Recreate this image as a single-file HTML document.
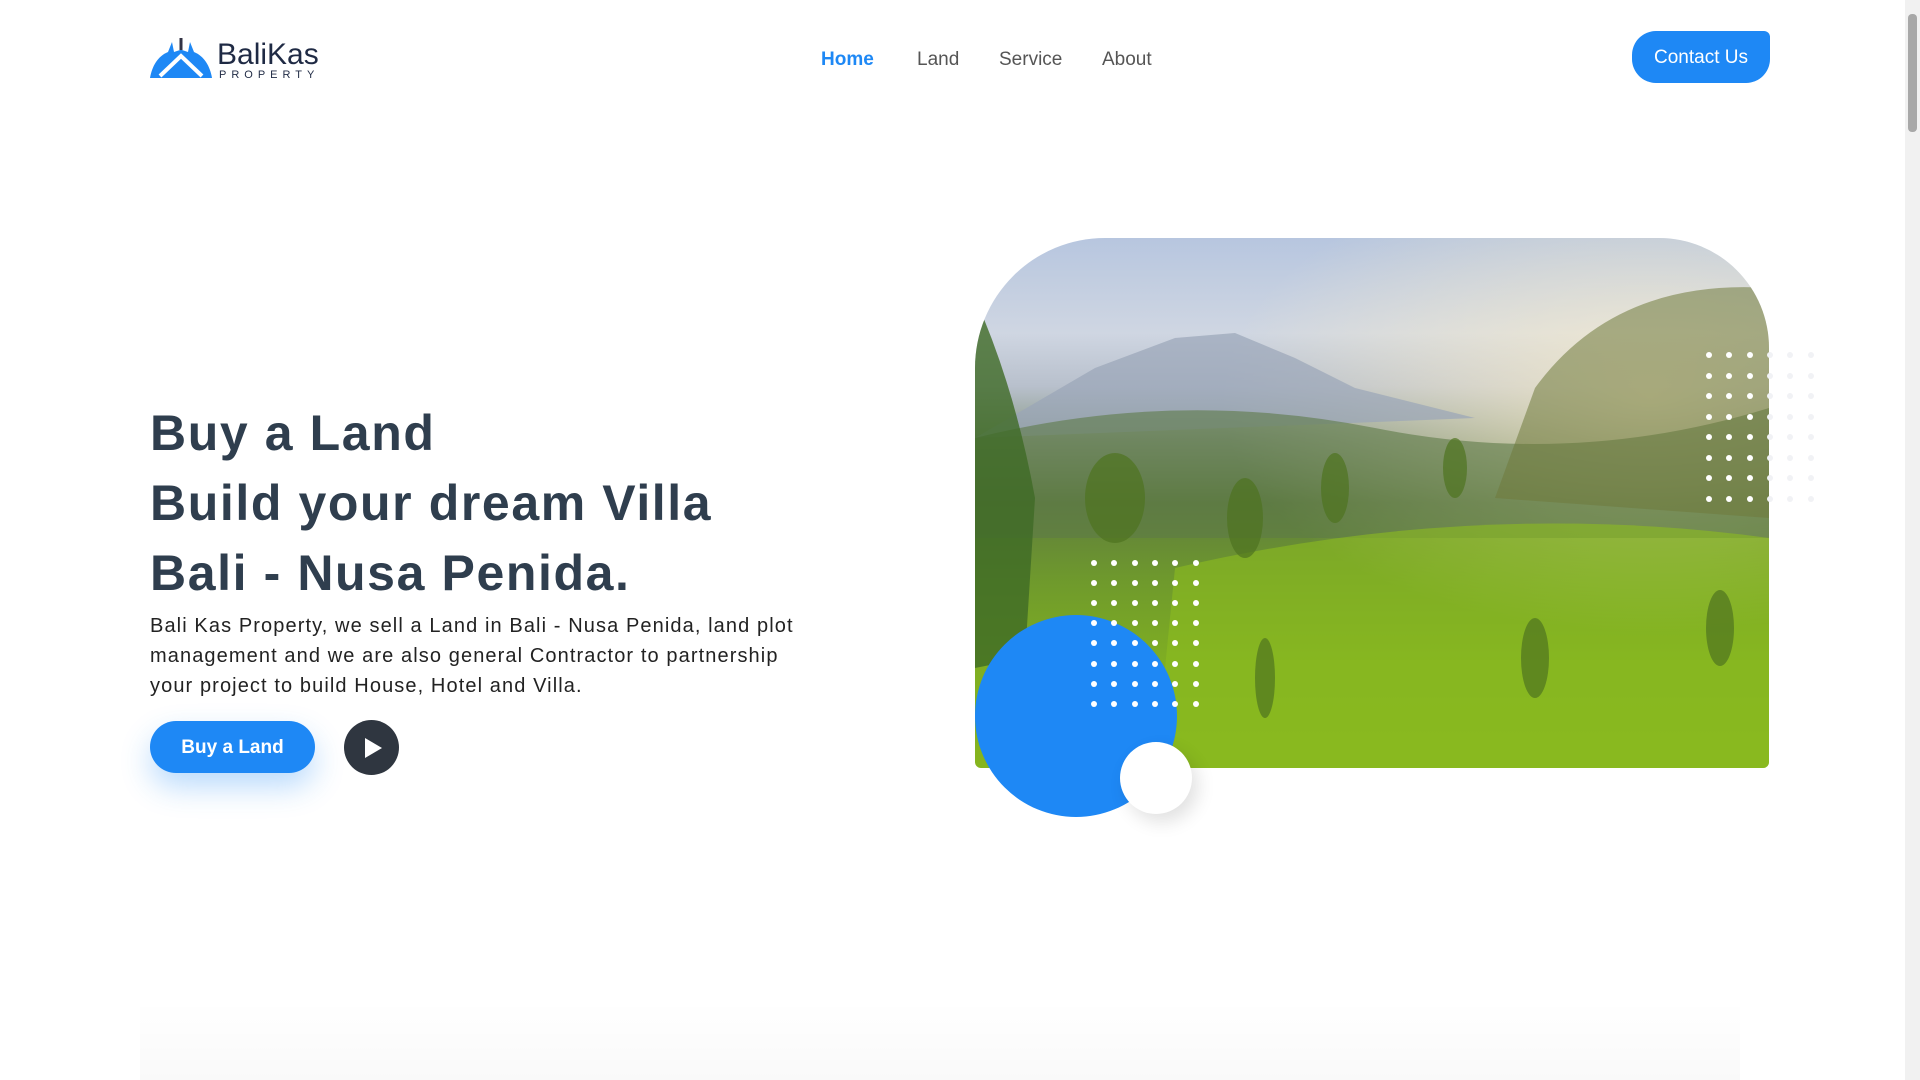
<!DOCTYPE html>
<html><head><meta charset="utf-8"><style>
*{margin:0;padding:0;box-sizing:border-box}
body{width:1920px;height:1080px;overflow:hidden;background:#fff;font-family:"Liberation Sans",sans-serif;position:relative}
.a{position:absolute}
.nav a{position:absolute;top:49px;font-size:19px;color:#555;text-decoration:none}
h1{position:absolute;left:150px;top:398px;font-size:50px;line-height:70px;color:#2f3e4e;font-weight:bold;letter-spacing:1.6px}
.p{left:150px;top:611px;font-size:20px;line-height:30px;color:#222;width:665px;letter-spacing:1.1px}
.dot{position:absolute;width:6px;height:6px;border-radius:50%;background:#fff}
</style></head><body>
<svg class="a" style="left:148px;top:36px" width="66" height="44" viewBox="0 0 66 44">
<path d="M2 42 C4 30 10 20 20 16 L24 6 L26 16 L32 14 L33 4 L34 14 L40 16 L42 6 L46 16 C56 20 62 30 64 42 Z" fill="#1e88f5"/>
<path d="M12 40 L33 20 L54 40" fill="none" stroke="#fff" stroke-width="4"/>
<path d="M33 2 V14" stroke="#334" stroke-width="3"/>
</svg>
<div class="a" style="left:217px;top:38px;font-size:30px;color:#1f2a44">BaliKas</div>
<div class="a" style="left:219px;top:69px;font-size:11px;letter-spacing:5px;color:#1f2a44">PROPERTY</div>
<div class="nav">
<a style="left:821px;color:#1e88f5;font-weight:bold">Home</a>
<a style="left:917px">Land</a>
<a style="left:999px">Service</a>
<a style="left:1102px">About</a>
</div>
<div class="a" style="left:1632px;top:31px;width:138px;height:52px;background:#1e88f5;border-radius:24px 6px 24px 24px;color:#fff;font-size:19px;text-align:center;line-height:54px">Contact Us</div>
<h1>Buy a Land<br>Build your dream Villa<br>Bali - Nusa Penida.</h1>
<div class="a p">Bali Kas Property, we sell a Land in Bali - Nusa Penida, land plot management and we are also general Contractor to partnership your project to build House, Hotel and Villa.</div>
<div class="a" style="left:150px;top:721px;width:165px;height:52px;background:#1e88f5;border-radius:26px;color:#fff;font-size:19px;font-weight:bold;text-align:center;line-height:54px;box-shadow:0 14px 30px rgba(30,136,245,.3)">Buy a Land</div>
<div class="a" style="left:344px;top:720px;width:55px;height:55px;border-radius:50%;background:#2f3640"></div>
<svg class="a" style="left:362px;top:737px" width="22" height="22"><path d="M3 1 L20 11 L3 21Z" fill="#fff"/></svg>
<div class="a" style="left:975px;top:238px;width:794px;height:530px;border-radius:130px 110px 6px 6px;overflow:hidden;background:linear-gradient(180deg,#b7c6df 0%,#cfd6e2 18%,#b8c0cc 28%,#8a9a86 38%,#5f7d3e 50%,#6f9a2c 65%,#7fae22 80%,#86b51e 100%)">
<div class="a" style="left:0;top:0;width:794px;height:530px;background:radial-gradient(ellipse at 85% 30%,rgba(255,240,200,.75),rgba(255,240,200,0) 45%)"></div>
<svg class="a" style="left:0;top:0" width="794" height="530">
<path d="M120 130 L200 100 L260 95 L320 120 L380 150 L500 180 L0 200Z" fill="#9aa5b8" opacity=".7"/>
<path d="M0 200 Q200 150 400 190 T794 170 L794 300 L0 300Z" fill="#5d7a48" opacity=".6"/>
<path d="M560 150 Q640 40 794 50 L794 280 L520 260Z" fill="#6f7a3c" opacity=".55"/>
<path d="M0 60 Q40 150 60 260 L50 420 L0 430Z" fill="#3f6a25" opacity=".8"/>
<path d="M200 330 Q500 260 794 300 L794 530 L180 530Z" fill="#8cbc1f" opacity=".6"/>
<g fill="#4e7320" opacity=".7"><ellipse cx="270" cy="280" rx="18" ry="40"/><ellipse cx="360" cy="250" rx="14" ry="35"/><ellipse cx="480" cy="230" rx="12" ry="30"/><ellipse cx="560" cy="420" rx="14" ry="40"/><ellipse cx="745" cy="390" rx="14" ry="38"/><ellipse cx="290" cy="440" rx="10" ry="40"/><ellipse cx="140" cy="260" rx="30" ry="45"/></g>
</svg>
</div>
<div class="a" style="left:975px;top:615px;width:202px;height:202px;border-radius:50%;background:#1e88f5"></div>
<div class="a" style="left:1120px;top:742px;width:72px;height:72px;border-radius:50%;background:#fff;box-shadow:6px 8px 18px rgba(0,0,0,.12)"></div>
<div id="d1"></div>
<script>
var h='';
for(var r=0;r<8;r++)for(var c=0;c<6;c++){h+='<div class="dot" style="left:'+(1091+c*20.3)+'px;top:'+(560+r*20.1)+'px"></div>';}
for(var r=0;r<8;r++)for(var c=0;c<6;c++){var x=1706+c*20.3;h+='<div class="dot" style="left:'+x+'px;top:'+(352+r*20.5)+'px;'+(x>1765?'background:#f1f2f5':'')+'"></div>';}
document.getElementById('d1').innerHTML=h;
</script>
<div class="a" style="left:140px;top:1000px;width:1600px;height:80px;background:linear-gradient(180deg,rgba(0,0,0,0),rgba(0,0,0,.025))"></div>
<div class="a" style="left:1905px;top:0;width:15px;height:1080px;background:#f1f1f1"></div>
<div class="a" style="left:1908px;top:14px;width:9px;height:118px;background:#a8a8a8;border-radius:4px"></div>
</body></html>
